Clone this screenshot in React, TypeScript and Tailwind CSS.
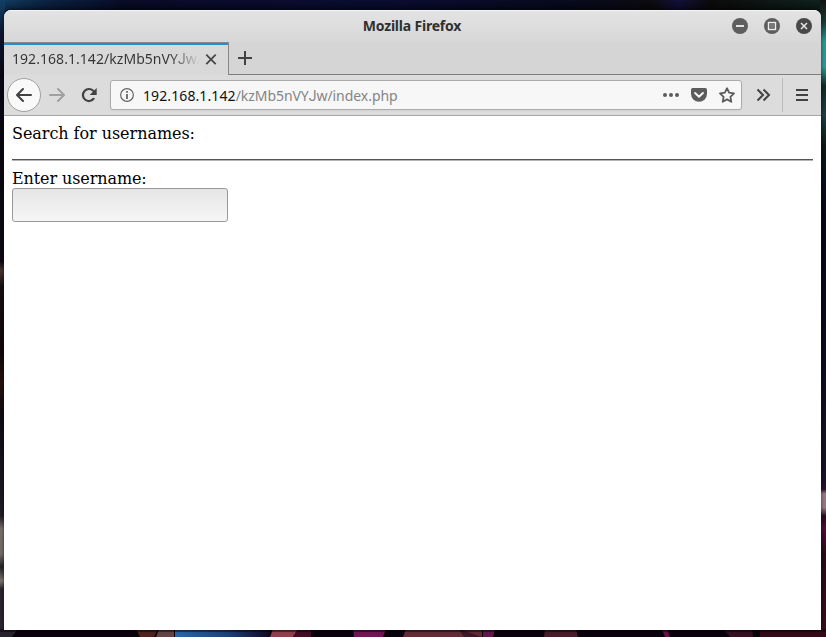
import React from "react";

function Wallpaper() {
  return (
    <svg className="absolute inset-0 h-[637px] w-[826px]" viewBox="0 0 826 637" aria-hidden="true">
      <defs>
        <linearGradient id="top" x1="0" x2="1" y1="0" y2="0">
          <stop offset="0" stopColor="#124066" />
          <stop offset="0.05" stopColor="#0b2547" />
          <stop offset="0.15" stopColor="#080c28" />
          <stop offset="0.45" stopColor="#0a0d35" />
          <stop offset="0.68" stopColor="#080a20" />
          <stop offset="0.79" stopColor="#0c0c10" />
          <stop offset="0.82" stopColor="#11103a" />
          <stop offset="0.86" stopColor="#0c0b0c" />
          <stop offset="1" stopColor="#10241f" />
        </linearGradient>
        <linearGradient id="shade" x1="0" x2="0" y1="0" y2="1">
          <stop offset="0" stopColor="#000" stopOpacity="0" />
          <stop offset="1" stopColor="#000" stopOpacity="0.45" />
        </linearGradient>
        <linearGradient id="left" x1="0" x2="0" y1="0" y2="1">
          <stop offset="0" stopColor="#124066" />
          <stop offset="0.05" stopColor="#0d1833" />
          <stop offset="0.12" stopColor="#090713" />
          <stop offset="0.41" stopColor="#0e0912" />
          <stop offset="0.425" stopColor="#4a3531" />
          <stop offset="0.45" stopColor="#160e13" />
          <stop offset="0.55" stopColor="#12060a" />
          <stop offset="0.6" stopColor="#25110e" />
          <stop offset="0.65" stopColor="#100b12" />
          <stop offset="0.81" stopColor="#211b23" />
          <stop offset="0.83" stopColor="#76706b" />
          <stop offset="0.87" stopColor="#716c67" />
          <stop offset="0.89" stopColor="#252027" />
          <stop offset="0.912" stopColor="#7a756f" />
          <stop offset="0.925" stopColor="#29232c" />
          <stop offset="1" stopColor="#2c2530" />
        </linearGradient>
        <linearGradient id="right" x1="0" x2="0" y1="0" y2="1">
          <stop offset="0" stopColor="#10130e" />
          <stop offset="0.035" stopColor="#153b36" />
          <stop offset="0.065" stopColor="#239a96" />
          <stop offset="0.105" stopColor="#2b9994" />
          <stop offset="0.135" stopColor="#102824" />
          <stop offset="0.18" stopColor="#17403f" />
          <stop offset="0.23" stopColor="#0b1718" />
          <stop offset="0.34" stopColor="#050716" />
          <stop offset="0.5" stopColor="#070919" />
          <stop offset="0.75" stopColor="#18102c" />
          <stop offset="0.768" stopColor="#261030" />
          <stop offset="0.775" stopColor="#9c7581" />
          <stop offset="0.797" stopColor="#987782" />
          <stop offset="0.81" stopColor="#29091e" />
          <stop offset="0.83" stopColor="#520a35" />
          <stop offset="0.87" stopColor="#2b0719" />
          <stop offset="1" stopColor="#3e0a1a" />
        </linearGradient>
        <linearGradient id="blue" x1="0" x2="1">
          <stop offset="0" stopColor="#2b67a8" />
          <stop offset="0.55" stopColor="#1c4079" />
          <stop offset="1" stopColor="#100821" />
        </linearGradient>
      </defs>
      <rect width="826" height="637" fill="#09020d" />
      <rect width="826" height="11" fill="url(#top)" />
      <rect width="826" height="11" fill="url(#shade)" />
      <rect width="5" height="637" fill="url(#left)" />
      <rect x="820" width="6" height="637" fill="url(#right)" />
      <path d="M0 629H18L12 637H0Z" fill="#272129" />
      <path d="M136 629H158L154 637H140Z" fill="#4b241f" />
      <path d="M159 629H174V637H156Z" fill="#634442" />
      <path d="M175 629H270V637H175Z" fill="url(#blue)" />
      <path d="M273 629H298L293 637H270Z" fill="#903e4d" />
      <path d="M298 629H311V637H293Z" fill="#430c24" />
      <path d="M353 629H386L383 637H354Z" fill="#711554" />
      <path d="M406 629H482V637H403Z" fill="#622c36" />
      <path d="M459 629L482 637H464Z" fill="#3b1727" />
      <path d="M483 629H495L493 637H483Z" fill="#60184a" />
      <path d="M545 629H576L578 637H544Z" fill="#481c2a" />
      <path d="M662 629H667L670 637H665Z" fill="#661249" />
      <path d="M723 629H752L753 637H730Z" fill="#351021" />
      <path d="M760 629H826V637H760Z" fill="#330918" />
      <rect y="629" width="826" height="3" fill="#07010a" opacity="0.4" />
    </svg>
  );
}

function WindowButton({ kind }: { kind: "minimize" | "maximize" | "close" }) {
  return (
    <svg className="size-4" viewBox="0 0 16 16" aria-label={kind}>
      <circle cx="8" cy="8" r="8" fill={kind === "close" ? "#484848" : "#5e5e5e"} />
      {kind === "minimize" && <path d="M4 8H12" stroke="#e1e1e1" strokeWidth="2" />}
      {kind === "maximize" && <><rect x="4.5" y="4.5" width="7" height="7" fill="#5e5e5e" stroke="#ececec" strokeWidth="1.4" /><rect x="6" y="6" width="4" height="4" fill="#777" /></>}
      {kind === "close" && <path d="M5 5L11 11M11 5L5 11" stroke="#e7e7e7" strokeWidth="1.5" />}
    </svg>
  );
}

function TitleBar() {
  return (
    <header className="grid h-8 shrink-0 grid-cols-[1fr_auto_1fr] items-center border-t border-[#f4f4f4] bg-linear-to-b from-[#e3e3e3] to-[#d7d7d7] pr-[9px] pb-px">
      <span />
      <h1 className="pl-[8px] text-[14px] leading-5 font-bold tracking-[-0.2px] text-[#303030]">Mozilla Firefox</h1>
      <div className="flex justify-end gap-4">
        <WindowButton kind="minimize" />
        <WindowButton kind="maximize" />
        <WindowButton kind="close" />
      </div>
    </header>
  );
}

function TabBar() {
  return (
    <div className="flex h-[33px] shrink-0 bg-[#d5d5d5]">
      <div className="flex w-[225px] items-center border-t border-r border-[#888] bg-[#d9d9d9] shadow-[inset_0_2px_0_#258fcd]">
        <span className="ml-2 w-[188px] bg-linear-to-r from-[#343434] from-84% to-transparent to-100% bg-clip-text text-[14px] leading-5 tracking-[0.05px] whitespace-nowrap text-transparent">192.168.1.142/kzMb5nVY<span className="font-['Roboto',sans-serif]">J</span>w/</span>
        <svg className="ml-1 h-[14px] w-[14px]" viewBox="0 0 14 14" stroke="#474747" strokeWidth="1.8">
          <path d="M2.3 2.7L11.7 12.1M11.7 2.7L2.3 12.1" />
        </svg>
      </div>
      <div className="flex flex-1 items-center border-b border-[#7e7e7e] pl-2">
        <svg className="size-4" viewBox="0 0 16 16" stroke="#424242" strokeWidth="2">
          <path d="M1 8H15M8 1V15" />
        </svg>
      </div>
    </div>
  );
}

function Toolbar() {
  return (
    <nav className="flex h-[41px] shrink-0 items-center border-b border-[#a6a6a6] bg-[#dcdcdc] pl-[3px]">
      <button className="grid size-[34px] place-items-center rounded-full border border-[#a0a0a0] bg-[#f9f9f9]" aria-label="Back">
        <svg className="size-4" viewBox="0 0 16 16" fill="none" stroke="#424242" strokeWidth="2" strokeLinecap="round" strokeLinejoin="round">
          <path d="M15 8H1.5M7 2L1 8L7 14" />
        </svg>
      </button>
      <svg className="ml-2 size-4" viewBox="0 0 16 16" fill="none" stroke="#a0a0a0" strokeWidth="2" strokeLinecap="round" strokeLinejoin="round">
        <path d="M1 8H14.5M9 2L15 8L9 14" />
      </svg>
      <svg className="ml-4 size-4" viewBox="0 0 16 16">
        <path d="M12.6 11.8A6 6 0 1 1 12.2 3.8L13.5 5" fill="none" stroke="#424242" strokeWidth="2.2" strokeLinecap="round" />
        <path d="M15.7 1V8H8.7Z" fill="#424242" />
      </svg>
      <div className="ml-[13px] flex h-[30px] w-[632px] items-center rounded-[3px] border border-[#ababab] bg-[#f7f7f7] pr-[6px] pl-[9px] shadow-[0_1px_2px_rgba(0,0,0,0.05)]">
        <svg className="size-[14px]" viewBox="0 0 14 14">
          <circle cx="7" cy="7" r="6.35" fill="none" stroke="#666" strokeWidth="1.2" />
          <path d="M7 6V11M7 3V4.7" stroke="#666" strokeWidth="1.8" />
        </svg>
        <span className="ml-[9px] pt-px text-[14px] leading-5 tracking-[0.1px] text-[#111]">192.168.1.142<span className="tracking-[-0.05px] text-[#858585]">/kzMb5nVY<span className="font-['Roboto',sans-serif]">J</span>w/index.php</span></span>
        <svg className="ml-auto size-4" viewBox="0 0 16 16" fill="#5c5c5c">
          <circle cx="2" cy="8" r="2" /><circle cx="8" cy="8" r="2" /><circle cx="14" cy="8" r="2" />
        </svg>
        <svg className="ml-3 size-4" viewBox="0 0 16 16">
          <path d="M1.7 1H14.3Q16 1 16 2.7V6.8A8 8 0 0 1 0 6.8V2.7Q0 1 1.7 1Z" fill="#5c5c5c" />
          <path d="M4.1 6L8 9.7L11.9 6" fill="none" stroke="#f7f7f7" strokeWidth="2" strokeLinecap="round" strokeLinejoin="round" />
        </svg>
        <svg className="ml-3 size-4" viewBox="0 0 16 16" fill="none" stroke="#5c5c5c" strokeWidth="1.8" strokeLinejoin="round">
          <path d="M8 1.2L10.1 5.7L15 6.4L11.4 9.9L12.3 14.8L8 12.4L3.7 14.8L4.6 9.9L1 6.4L5.9 5.7Z" />
        </svg>
      </div>
      <svg className="ml-[13px] size-4" viewBox="0 0 16 16" fill="none" stroke="#424242" strokeWidth="2">
        <path d="M2.5 2.5L8 8L2.5 13.5M8.5 2.5L14 8L8.5 13.5" />
      </svg>
      <div className="ml-[11px] h-[34px] w-px bg-[#bcbcbc]" />
      <svg className="ml-[13px] h-4 w-3" viewBox="0 0 12 16" stroke="#424242" strokeWidth="2">
        <path d="M0 3H12M0 8H12M0 13H12" />
      </svg>
    </nav>
  );
}

export default function App() {
  return (
    <div className="relative h-[637px] w-[826px] overflow-hidden pt-[10px] pl-1 font-['Noto_Sans',sans-serif]">
      <Wallpaper />
      <div className="relative flex h-[620px] w-[817px] flex-col overflow-hidden rounded-t-[7px] bg-white shadow-[0_0_3px_1px_rgba(0,0,0,0.35)]">
        <TitleBar />
        <TabBar />
        <Toolbar />
        <main className="px-2 pt-[8px] font-['DejaVu_Serif',serif] text-[16px] leading-[19px] tracking-[-0.05px] text-black">
          <p>Search for usernames:</p>
          <hr className="mt-[16px] mb-[8px] h-[2px] border-t border-b border-t-[#555] border-b-[#b5b5b5]" />
          <label className="block tracking-[-0.1px]" htmlFor="username">Enter username:</label>
          <input id="username" className="block h-[34px] w-[216px] rounded-[3px] border border-[#999] bg-linear-to-b from-[#e6e6e6] to-[#f6f6f6] px-2 outline-none" />
        </main>
      </div>
    </div>
  );
}
